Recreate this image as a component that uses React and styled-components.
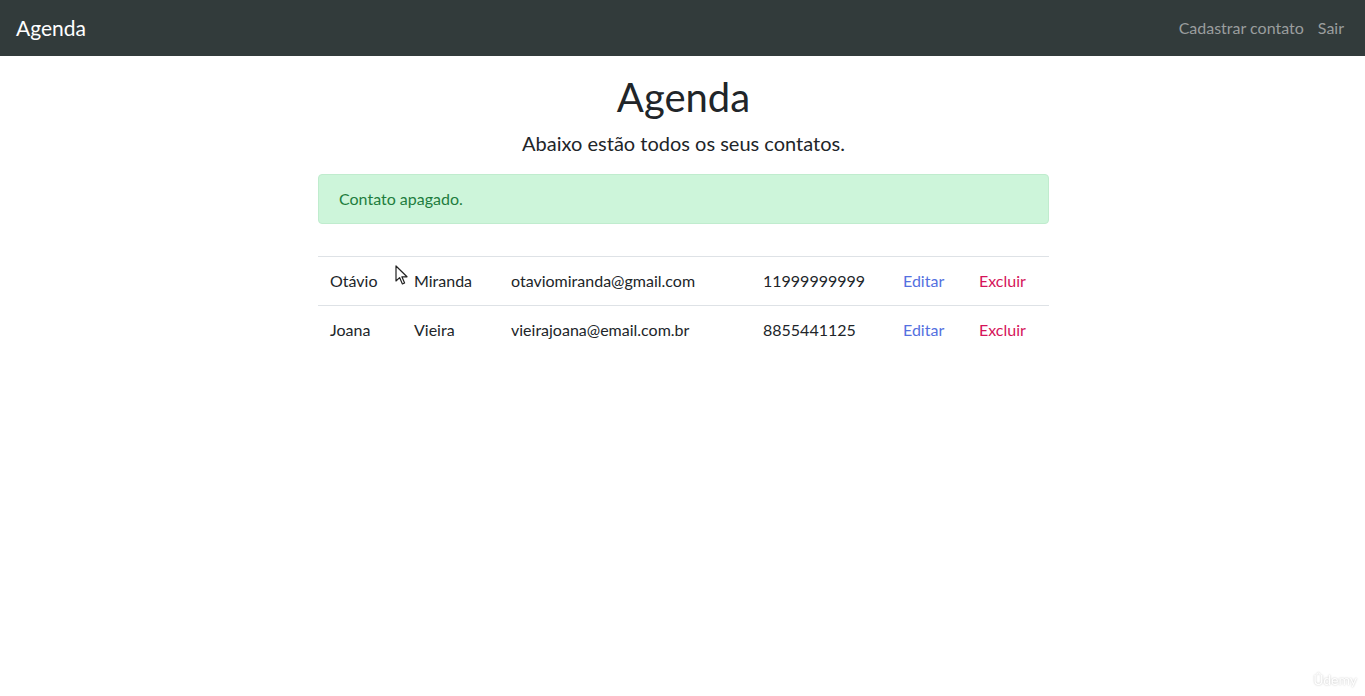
import React from 'react';
import styled, { createGlobalStyle } from 'styled-components';

const contacts = [
	{ nome: 'Otávio', sobrenome: 'Miranda', email: 'otaviomiranda@gmail.com', telefone: '11999999999' },
	{ nome: 'Joana', sobrenome: 'Vieira', email: 'vieirajoana@email.com.br', telefone: '8855441125' },
];

const GlobalStyle = createGlobalStyle`
	* {
		box-sizing: border-box;
	}

	body {
		margin: 0;
		font-family: Lato, 'Open Sans', sans-serif;
		font-size: 16px;
		line-height: 1.5;
		color: #212529;
		background: #fff;
	}
`;

function App() {
	return (
		<>
			<GlobalStyle />
			<Navbar>
				<Brand href="#">Agenda</Brand>
				<NavLinks>
					<NavLink href="#">Cadastrar contato</NavLink>
					<NavLink href="#">Sair</NavLink>
				</NavLinks>
			</Navbar>

			<Main>
				<Title>Agenda</Title>
				<Lead>Abaixo estão todos os seus contatos.</Lead>
				<Alert>Contato apagado.</Alert>

				<TableWrap>
					<Table>
						<colgroup>
							<col style={{ width: 84 }} />
							<col style={{ width: 97 }} />
							<col style={{ width: 252 }} />
							<col style={{ width: 140 }} />
							<col style={{ width: 76 }} />
							<col />
						</colgroup>
						<tbody>
							{contacts.map((c) => (
								<tr key={c.email}>
									<Cell>{c.nome}</Cell>
									<Cell>{c.sobrenome}</Cell>
									<Cell>{c.email}</Cell>
									<Cell>{c.telefone}</Cell>
									<Cell>
										<ActionLink href="#" $danger={false}>Editar</ActionLink>
									</Cell>
									<Cell>
										<ActionLink href="#" $danger>Excluir</ActionLink>
									</Cell>
								</tr>
							))}
						</tbody>
					</Table>

					{/* mouse pointer captured in the screenshot */}
					<Cursor width="14" height="21" viewBox="0 0 14 21">
						<path
							d="M1 1 L1 16 L4.6 12.6 L7.4 19 L9.6 18 L6.9 11.8 L12 11.8 Z"
							fill="#fff"
							stroke="#222"
							strokeWidth="1.2"
							strokeLinejoin="round"
						/>
					</Cursor>
				</TableWrap>
			</Main>

			<Watermark>Ûdemy</Watermark>
		</>
	);
}

export default App;

const Navbar = styled.nav`
	display: flex;
	align-items: center;
	justify-content: space-between;
	height: 56px;
	padding: 0 16px;
	background-color: #323b3b;
`;

const Brand = styled.a`
	color: #fff;
	font-size: 21px;
	text-decoration: none;
`;

const NavLinks = styled.div`
	display: flex;
	gap: 14px;
	padding-right: 5px;
`;

const NavLink = styled.a`
	color: #9a9e9e;
	font-size: 16px;
	text-decoration: none;
`;

const Main = styled.main`
	width: 733px;
	margin: 0 auto;
	padding: 17px 0 0 2px;
	display: flex;
	flex-direction: column;
	align-items: center;
`;

const Title = styled.h1`
	margin: 0;
	font-size: 40px;
	font-weight: 400;
	line-height: 1.2;
`;

const Lead = styled.p`
	margin: 7px 0 16px;
	font-size: 20px;
	font-weight: 400;
`;

const Alert = styled.div`
	width: 100%;
	padding: 12px 20px;
	margin-bottom: 32px;
	border: 1px solid #c0ecce;
	border-radius: 4px;
	background-color: #cdf5da;
	color: #1e7d3e;
`;

const TableWrap = styled.div`
	position: relative;
	width: 100%;
`;

const Table = styled.table`
	width: 100%;
	border-collapse: collapse;
	table-layout: fixed;
`;

const Cell = styled.td`
	padding: 12px;
	border-top: 1px solid #dee2e6;
	white-space: nowrap;
`;

const ActionLink = styled.a`
	color: ${(p) => (p.$danger ? '#d5145a' : '#5470e0')};
	text-decoration: none;
`;

const Cursor = styled.svg`
	position: absolute;
	left: 77px;
	top: 9px;
	pointer-events: none;
`;

const Watermark = styled.div`
	position: fixed;
	right: 8px;
	bottom: 6px;
	color: #fff;
	font-size: 14px;
	text-shadow: 0 0 2px #bbb;
`;
